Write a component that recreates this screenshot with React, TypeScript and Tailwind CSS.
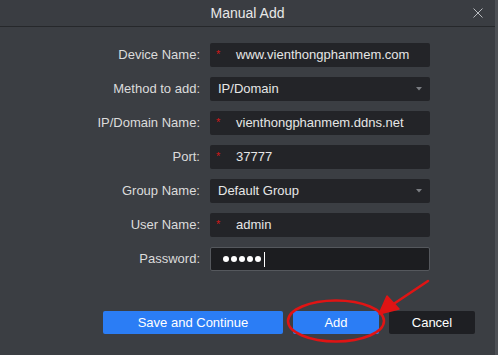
const fields = [
  { label: 'Device Name:', value: 'www.vienthongphanmem.com', required: true },
  { label: 'Method to add:', value: 'IP/Domain', select: true },
  { label: 'IP/Domain Name:', value: 'vienthongphanmem.ddns.net', required: true },
  { label: 'Port:', value: '37777', required: true },
  { label: 'Group Name:', value: 'Default Group', select: true },
  { label: 'User Name:', value: 'admin', required: true },
]

export default function App() {
  return (
    <div
      className="relative w-[498px] h-[355px] overflow-hidden bg-[#3b3e43] text-[#dcdcdc] border-r-[3px] border-[#4d5055]"
      style={{ fontFamily: '"Liberation Sans", Arial, sans-serif' }}
    >
      {/* Header */}
      <div className="relative h-[27px] flex items-center justify-center border-b border-[#26282b] bg-[#3a3d42]">
        <span className="text-[14px] text-[#e8e8e8]">Manual Add</span>
        <svg className="absolute right-[12px] top-[8px]" width="10" height="10" viewBox="0 0 10 10">
          <path d="M0.5 0.5 L9.5 9.5 M9.5 0.5 L0.5 9.5" stroke="#b8bbbf" strokeWidth="1" />
        </svg>
      </div>

      {/* Form */}
      <div className="flex flex-col gap-[10px] pt-[16px]">
        {fields.map((f) => (
          <div key={f.label} className="flex items-center h-[24px]">
            <label className="w-[200px] text-right text-[13px]">{f.label}</label>
            <div className="ml-[10px] w-[220px] h-[24px] bg-[#232428] rounded-[2px] flex items-center text-[13px] text-[#e6e6e6]">
              {f.required ? (
                <>
                  <span className="w-[26px] pl-[6px] text-[#d01818] text-[11px] self-start pt-[3px]">*</span>
                  <span>{f.value}</span>
                </>
              ) : (
                <span className="pl-[8px]">{f.value}</span>
              )}
              {f.select && (
                <svg className="ml-auto mr-[8px]" width="6" height="4" viewBox="0 0 6 4">
                  <path d="M0 0 L6 0 L3 3.5 Z" fill="#7a7d82" />
                </svg>
              )}
            </div>
          </div>
        ))}
        <div className="flex items-center h-[24px]">
          <label className="w-[200px] text-right text-[13px]">Password:</label>
          <div className="ml-[10px] w-[220px] h-[24px] bg-[#1c1d20] border border-[#55585d] rounded-[2px] flex items-center pl-[12px] gap-[2px]">
            <span className="w-[6px] h-[6px] rounded-full bg-white" />
            <span className="w-[6px] h-[6px] rounded-full bg-white" />
            <span className="w-[6px] h-[6px] rounded-full bg-white" />
            <span className="w-[6px] h-[6px] rounded-full bg-white" />
            <span className="w-[6px] h-[6px] rounded-full bg-white" />
            <span className="w-[1px] h-[15px] bg-white ml-[1px]" />
          </div>
        </div>
      </div>

      {/* Buttons */}
      <div className="flex gap-[10px] pl-[103px] mt-[40px]">
        <button className="w-[180px] h-[23px] bg-[#2b7df5] rounded-[2px] text-[13px] text-white">
          Save and Continue
        </button>
        <button className="w-[86px] h-[23px] bg-[#2b7df5] rounded-[2px] text-[13px] text-white">
          Add
        </button>
        <button className="w-[86px] h-[23px] bg-[#1e1f23] rounded-[2px] text-[13px] text-white">
          Cancel
        </button>
      </div>

      {/* Annotation */}
      <svg className="absolute left-0 top-0 pointer-events-none" width="498" height="355" viewBox="0 0 498 355">
        <ellipse cx="336" cy="321" rx="48" ry="20.5" fill="none" stroke="#e01414" strokeWidth="2.5" />
        <path d="M428 281 L392 305" stroke="#e01414" strokeWidth="2.5" strokeLinecap="round" />
        <path d="M379 314 L387 296 L399 309 Z" fill="#e01414" stroke="#e01414" strokeWidth="1.5" strokeLinejoin="round" />
      </svg>
    </div>
  )
}
